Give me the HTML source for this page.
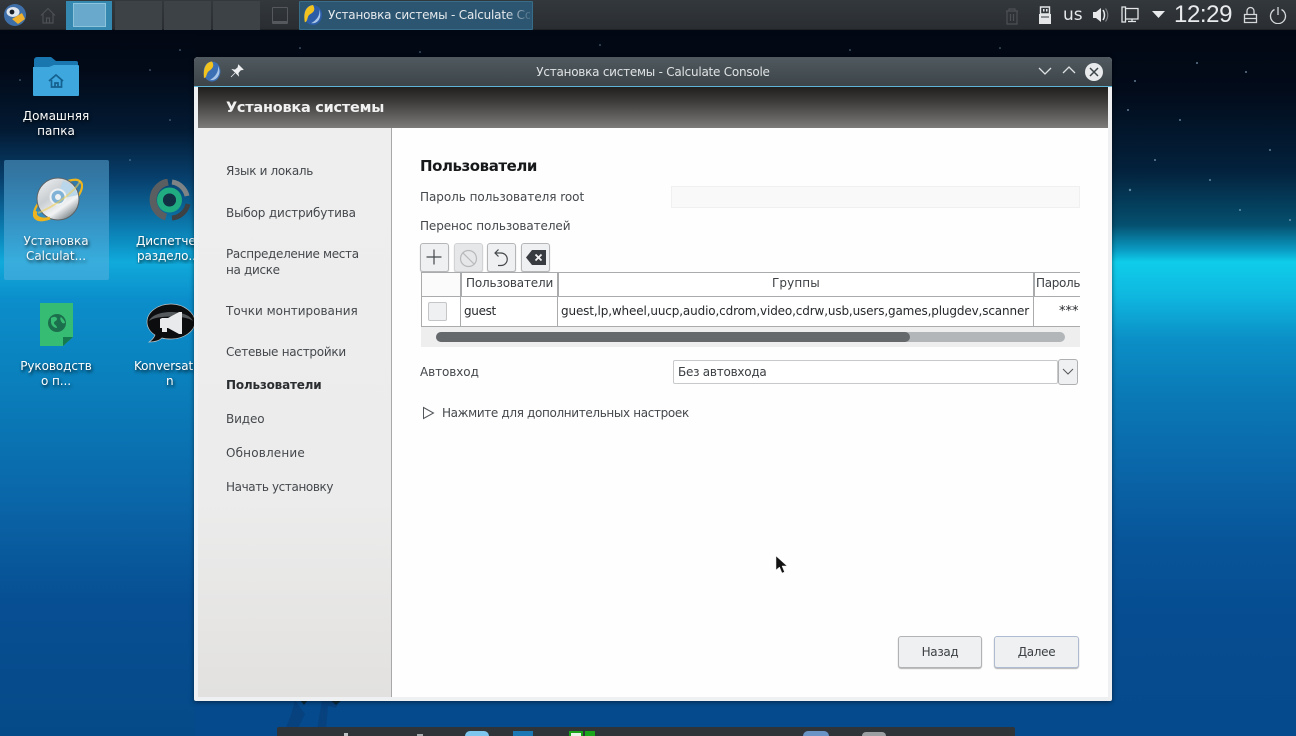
<!DOCTYPE html>
<html lang="ru"><head><meta charset="utf-8"><title>Установка системы</title>
<style>
*{box-sizing:border-box}
html,body{margin:0;padding:0;width:1296px;height:736px;overflow:hidden}
body{position:relative;font-family:"DejaVu Sans","Liberation Sans",sans-serif;font-size:12px;letter-spacing:-.33px;color:#31363b;
background:linear-gradient(180deg,#02060f 0,#020b1a 90px,#03213c 170px,#05506f 225px,#0a9cc4 250px,#0fcdea 262px,#0fb8e0 295px,#0b8fc6 340px,#0a78b5 400px,#0a66a8 470px,#08559a 540px,#064c90 620px,#054a8c 736px)}
.a{position:absolute;white-space:nowrap}
.d{position:absolute;width:100px;text-align:center;color:#fff;font-size:12px;letter-spacing:0;line-height:15px;text-shadow:1px 2px 3px rgba(0,0,0,.85)}
.n{position:absolute;left:226px;white-space:nowrap;color:#44484c;line-height:15.5px}
.btn{position:absolute;top:243px;width:29px;height:29px;background:#eff0f1;border:1px solid #b4b6b8;border-radius:3px;box-shadow:0 1px 1px rgba(0,0,0,.2)}
.ln{position:absolute;background:#a9abad}
</style></head><body>
<div class="a" style="left:0;top:0;width:195px;height:736px;background:linear-gradient(180deg,#02060f 0,#020a18 70px,#031a33 130px,#07416f 180px,#0a6598 210px,#0c8cc0 240px,#10aadb 262px,#0b8ecb 300px,#0a80bc 380px,#0a66a8 500px,#074f93 600px,#054a88 736px)"></div>
<svg class="a" style="left:0;top:30px" width="1296" height="220">
<g fill="#9fc4dc" opacity=".6"><circle cx="1135" cy="51" r="1"/><circle cx="1197" cy="33" r="1"/><circle cx="1246" cy="42" r="1"/><circle cx="1180" cy="90" r="1"/><circle cx="1130" cy="160" r="1.2"/><circle cx="1240" cy="180" r="1"/><circle cx="1290" cy="190" r="1"/><circle cx="1210" cy="150" r="1"/><circle cx="1155" cy="130" r="1"/><circle cx="1270" cy="120" r="1"/><circle cx="1128" cy="80" r="1"/><circle cx="150" cy="40" r=".8"/><circle cx="170" cy="90" r=".8"/><circle cx="20" cy="50" r=".8"/><circle cx="130" cy="130" r=".8"/><circle cx="180" cy="20" r=".8"/><circle cx="300" cy="18" r=".8"/><circle cx="420" cy="22" r=".8"/><circle cx="600" cy="15" r=".8"/><circle cx="850" cy="20" r=".8"/><circle cx="1000" cy="18" r=".8"/></g></svg>

<!-- top panel -->
<div class="a" style="left:0;top:0;width:1296px;height:30px;background:linear-gradient(#33383d,#2a2e32);border-bottom:1px solid #202326"></div>
<svg class="a" style="left:4px;top:4px" width="22" height="22" viewBox="0 0 22 22"><circle cx="11" cy="11" r="11" fill="#3f6fa8"/><ellipse cx="9" cy="8" rx="6.500" ry="5" fill="#dfe6ee"/><circle cx="8" cy="8" r="2.400" fill="#171d26"/><path d="M8 15l10-6 3 6-7 5z" fill="#eeb02d"/></svg>
<svg class="a" style="left:40px;top:7px" width="16" height="17" viewBox="0 0 16 17" fill="none" stroke="#4c5054" stroke-width="1.200"><path d="M1 8.500l7-7 7 7M3 7v9h10V7M6.500 16v-5h3v5"/></svg>
<div class="a" style="left:66px;top:1px;width:46px;height:29px;background:#3589b0"></div>
<div class="a" style="left:73px;top:3px;width:33px;height:24px;background:#69a9cc;border:1px solid #8cc4de"></div>
<div class="a" style="left:115px;top:1px;width:47px;height:29px;background:#3d4246"></div>
<div class="a" style="left:164px;top:1px;width:47px;height:29px;background:#3d4246"></div>
<div class="a" style="left:213px;top:1px;width:47px;height:29px;background:#3d4246"></div>
<div class="a" style="left:272px;top:7px;width:16px;height:17px;border:1px solid #55595d;border-bottom-width:3px;border-radius:1px"></div>
<div class="a" style="left:299px;top:1px;width:234px;height:29px;background:#2b5570;border:1px solid #386d8a;border-radius:1px"></div>
<svg class="a" style="left:303px;top:4px" width="20" height="22" viewBox="0 0 22 22"><ellipse cx="11" cy="11" rx="10" ry="11" fill="#2c5da6"/><path d="M11 0C4 1 0 7 2 19c4-1 2-7 6-9s6-5 3-10z" fill="#f2c21f"/><path d="M18 5c1 6-3 12-9 15 6 1 10-4 10-9 0-2 0-4-1-6z" fill="#a9c6e8"/></svg>
<div class="a" style="left:328px;top:7px;width:202px;overflow:hidden;color:#e6eaee;font-size:12px;letter-spacing:-.2px;line-height:16px;-webkit-mask-image:linear-gradient(90deg,#000 178px,rgba(0,0,0,.2) 200px)">Установка системы - Calculate Console</div>

<svg class="a" style="left:1004px;top:7px" width="16" height="18" viewBox="0 0 16 18" fill="none" stroke="#4d5155" stroke-width="1.200"><path d="M2 4h12M5 4V2h6v2M3 4v13h10V4M6.500 7v7M9.500 7v7"/></svg>
<svg class="a" style="left:1038px;top:6px" width="14" height="19" viewBox="0 0 14 19"><path d="M2.500 1h9v7h-9z" fill="none" stroke="#e3e5e7" stroke-width="1.400"/><path d="M1 8h12v10H1z" fill="#e3e5e7"/><path d="M5 3h1.500v2.500H5zM8 3h1.500v2.500H8z" fill="#e3e5e7"/><path d="M3 11h8" stroke="#33383d"/></svg>
<div class="a" style="left:1063px;top:5px;color:#e6e8ea;font-size:17px;letter-spacing:0;line-height:20px">us</div>
<svg class="a" style="left:1092px;top:6px" width="18" height="18" viewBox="0 0 18 18"><path d="M1 6h3l5-4v14l-5-4H1z" fill="#e6e8ea"/><path d="M11 4c2 3 2 7 0 10" fill="none" stroke="#e6e8ea" stroke-width="1.500"/><path d="M13.500 2.500c3 4 3 9 0 13" fill="none" stroke="#7b7f83" stroke-width="1.200"/></svg>
<svg class="a" style="left:1120px;top:6px" width="19" height="18" viewBox="0 0 19 18" fill="none" stroke="#e3e5e7" stroke-width="1.300"><path d="M5 2.500h13v10.500H5M2 1v15h3.500V1zM8 15.500h8M12 13v2"/></svg>
<svg class="a" style="left:1152px;top:11px" width="13" height="8" viewBox="0 0 13 8"><path d="M0 0h13L6.500 7z" fill="#e8eaec"/></svg>
<div class="a" style="left:1174px;top:1px;color:#e8eaec;font-size:24px;line-height:28px;letter-spacing:-.4px;font-family:'Liberation Sans',sans-serif">12:29</div>
<svg class="a" style="left:1243px;top:6px" width="15" height="18" viewBox="0 0 15 18" fill="none" stroke="#d5d7d9" stroke-width="1.300"><path d="M1.500 8.500h12v8h-12zM4 8.500V5a3.500 3.500 0 0 1 7 0v3.500M2 12.500h11"/></svg>
<svg class="a" style="left:1269px;top:6px" width="18" height="18" viewBox="0 0 18 18" fill="none" stroke="#d5d7d9" stroke-width="1.300"><path d="M5.500 3.500a7.500 7.500 0 1 0 7 0M9 1v8"/></svg>

<!-- desktop icons -->
<svg class="a" style="left:32px;top:55px" width="48" height="44" viewBox="0 0 48 44"><path d="M2 5a3 3 0 0 1 3-3h14l5 4h20a2 2 0 0 1 2 2v30H2z" fill="#1a76ae"/><path d="M1 12h16l5-2h24a1 1 0 0 1 1 1v29a1 1 0 0 1-1 1H2a1 1 0 0 1-1-1z" fill="#3ea7dd"/><path d="M17 26l7-6 7 6M19.500 25v7h10v-7M23 32v-4h3v4" fill="none" stroke="#14608f" stroke-width="1.700"/></svg>
<div class="d" style="left:6px;top:109px">Домашняя<br>папка</div>

<div class="a" style="left:4px;top:160px;width:105px;height:120px;background:rgba(96,178,224,.5);border-radius:2px"></div>
<svg class="a" style="left:33px;top:175px" width="50" height="50" viewBox="0 0 50 50"><defs><linearGradient id="cd" x1="0" y1="0" x2=".7" y2="1"><stop offset="0" stop-color="#f4f5f6"/><stop offset=".45" stop-color="#c9ced2"/><stop offset=".75" stop-color="#f2f3f4"/><stop offset="1" stop-color="#7e878c"/></linearGradient></defs><ellipse cx="25" cy="25" rx="29" ry="12" transform="rotate(-38 25 25)" fill="none" stroke="#eeb41e" stroke-width="2.200"/><circle cx="25" cy="24" r="21" fill="url(#cd)" stroke="#5b6266" stroke-width="1"/><path d="M30 6a21 21 0 0 1 15 14l-14 3a8 8 0 0 0-5-6z" fill="#b9d6ea"/><circle cx="25" cy="22" r="7.500" fill="#7fb2d6" stroke="#eef1f3" stroke-width="2"/><circle cx="25" cy="22" r="3" fill="#eef1f3"/><path d="M47 6C44 14 25 30 5 38" fill="none" stroke="#f4cf4b" stroke-width="1.800" opacity=".55"/><path d="M3 36c-3 6 5 10 14 7" fill="none" stroke="#eeb41e" stroke-width="3"/></svg>
<div class="d" style="left:6px;top:234px;color:#f2f8fb">Установка<br>Calculat...</div>

<svg class="a" style="left:149px;top:179px" width="42" height="42" viewBox="0 0 42 42" fill="none"><path d="M19 3A18 18 0 0 0 17 38" stroke="#5a5e61" stroke-width="7"/><path d="M23 3A18 18 0 0 1 38 17" stroke="#7e8385" stroke-width="5"/><path d="M39 25A18 18 0 0 1 23 39" stroke="#3d4144" stroke-width="5"/><circle cx="20.500" cy="21" r="9.500" stroke="#20ab80" stroke-width="6"/><circle cx="20.500" cy="21" r="6.500" fill="#123043"/></svg>
<div class="d" style="left:120px;top:234px;width:75px;text-align:left;padding-left:16px;overflow:hidden;letter-spacing:-.1px">Диспетче<br><span style="margin-left:1px">раздело...</span></div>

<svg class="a" style="left:40px;top:303px" width="34" height="44" viewBox="0 0 34 44"><path d="M0 0h33v34L23 43H0z" fill="#37bc74"/><path d="M23 43V34h10z" fill="#157a4e"/><circle cx="17" cy="20" r="9" fill="#1c6f4c"/><path d="M11 15c3-2 6-1 6 1s-3 2-3 4 3 2 3 5c-3 0-6-3-6-6zM21 14c2 2 4 4 4 6-2 1-3 0-4-2s-1-3 0-4z" fill="#37bc74"/></svg>
<div class="d" style="left:6px;top:359px;letter-spacing:-.08px">Руководств<br>о п...</div>

<svg class="a" style="left:146px;top:302px" width="49" height="46" viewBox="0 0 49 46"><path d="M25 2C12 2 1 10 1 20c0 5 3 10 8 13-1 3-3 5-6 7 5 0 10-1 13-4 3 1 6 1 9 1 13 0 24-8 24-17S38 2 25 2z" fill="#0c0d0e" stroke="#c0c4c7" stroke-width=".7"/><path d="M3 19C8 7 42 7 47 19 40 13 10 13 3 19z" fill="#55595c"/><path d="M16 16h6l11-6h3v22h-3l-11-6h-1v4h-5v-4h-2v-9z" fill="#e9eaeb"/></svg>
<div class="d" style="left:120px;top:359px;width:75px;overflow:hidden;text-align:left;padding-left:14px;letter-spacing:-.1px">Konversat<br><span style="margin-left:32px">n</span></div>

<!-- silhouette & dock -->
<svg class="a" style="left:270px;top:700px" width="130" height="30" viewBox="0 0 130 30"><path d="M25 0l10 14-8 16H15l6-15zM52 0h18l-4 8-8-2-2 24h-9z" fill="#0a3a72" opacity=".55"/><path d="M30 0l4 5 4-5zM60 0l6 5 6-5z" fill="#0a2a3a"/></svg>
<div class="a" style="left:277px;top:727px;width:738px;height:9px;background:#2e3438;border-radius:2px 2px 0 0"></div>
<div class="a" style="left:465px;top:731px;width:24px;height:5px;background:#7ec6ee;border-radius:12px 12px 0 0"></div>
<div class="a" style="left:513px;top:731px;width:20px;height:5px;background:#1b78b4"></div>
<div class="a" style="left:569px;top:731px;width:14px;height:5px;background:#e8f3e8;border:2px solid #1aa51a;border-bottom:0"></div>
<div class="a" style="left:585px;top:731px;width:10px;height:5px;background:#1aa51a"></div>
<div class="a" style="left:803px;top:731px;width:26px;height:5px;background:#6a93c6;border-radius:13px 13px 0 0"></div>
<div class="a" style="left:862px;top:732px;width:24px;height:4px;background:#9b9fa2;border-radius:12px 12px 0 0"></div>
<div class="a" style="left:344px;top:733px;width:4px;height:3px;background:#c0c3c5"></div>
<div class="a" style="left:417px;top:734px;width:6px;height:2px;background:#a8acae"></div>

<!-- window -->
<div class="a" style="left:194px;top:57px;width:918px;height:644px;background:#eff0f1;border-radius:4px 4px 2px 2px;box-shadow:0 1px 5px rgba(0,0,0,.5)"></div>
<div class="a" style="left:194px;top:57px;width:918px;height:30px;background:linear-gradient(#50595f,#3d4549);border-bottom:1px solid #5fb3d4;border-radius:4px 4px 0 0"></div>
<svg class="a" style="left:203px;top:61px" width="18" height="21" viewBox="0 0 18 21"><ellipse cx="9" cy="10.500" rx="8.500" ry="10" fill="#3d6fb4"/><path d="M9 .5C3 1 0 7 1 17c3 0 2-5 5-7s6-5 3-9.500z" fill="#f2c21f"/><path d="M15 5c1 6-3 11-8 14 5 1 9-3 9.500-8 0-2-.5-4-1.500-6z" fill="#a9c6e8"/></svg>
<svg class="a" style="left:230px;top:64px" width="14" height="14" viewBox="0 0 14 14"><path d="M8.500 1l4.500 4.500-2.500.5L8 9l.5 2.500-6-6L5 6l3-2.500zM5 9l-4 4" fill="#eef0f1" stroke="#eef0f1" stroke-width=".8"/></svg>
<div class="a" style="left:194px;top:65px;width:918px;text-align:center;color:#dfe2e4;font-size:12px;letter-spacing:-.24px;line-height:15px">Установка системы - Calculate Console</div>
<svg class="a" style="left:1038px;top:66px" width="14" height="10" viewBox="0 0 14 10"><path d="M1 2l6 6 6-6" fill="none" stroke="#dfe2e4" stroke-width="1.300"/></svg>
<svg class="a" style="left:1062px;top:65px" width="14" height="10" viewBox="0 0 14 10"><path d="M1 8l6-6 6 6" fill="none" stroke="#dfe2e4" stroke-width="1.300"/></svg>
<svg class="a" style="left:1085px;top:63px" width="18" height="18" viewBox="0 0 18 18"><circle cx="9" cy="9" r="9" fill="#e8eaeb"/><path d="M5 5l8 8M13 5l-8 8" stroke="#3d4549" stroke-width="1.500"/></svg>

<div class="a" style="left:198px;top:87px;width:910px;height:41px;background:linear-gradient(#211f1d,#383735 30%,#7c7b79)"></div>
<div class="a" style="left:226px;top:98px;color:#f1f1f1;font-size:14.500px;font-weight:bold;line-height:20px;letter-spacing:-.25px">Установка системы</div>

<div class="a" style="left:198px;top:128px;width:194px;height:569px;background:linear-gradient(#eeeeee,#ececec 65%,#e2e1df);border-right:1px solid #a8a8a8"></div>
<div class="a" style="left:392px;top:128px;width:716px;height:569px;background:#fefefe"></div>

<div class="n" style="top:164px">Язык и локаль</div>
<div class="n" style="top:206px;letter-spacing:-.16px">Выбор дистрибутива</div>
<div class="n" style="top:247px">Распределение места<br>на диске</div>
<div class="n" style="top:304px;letter-spacing:-.01px">Точки монтирования</div>
<div class="n" style="top:345px;letter-spacing:-.27px">Сетевые настройки</div>
<div class="n" style="top:378px;font-weight:bold;color:#2b2e31;letter-spacing:-.2px">Пользователи</div>
<div class="n" style="top:412px;letter-spacing:-.13px">Видео</div>
<div class="n" style="top:446px;letter-spacing:.17px">Обновление</div>
<div class="n" style="top:480px;letter-spacing:-.39px">Начать установку</div>

<div class="a" style="left:420px;top:156px;color:#16181a;font-size:15px;font-weight:bold;line-height:20px;letter-spacing:-.45px">Пользователи</div>
<div class="a" style="left:420px;top:190px;line-height:15px;color:#44484c;letter-spacing:-.04px">Пароль пользователя root</div>
<div class="a" style="left:671px;top:186px;width:409px;height:22px;background:#f9f9f9;border:1px solid #f0f0f0"></div>
<div class="a" style="left:420px;top:219px;line-height:15px;color:#44484c;letter-spacing:-.09px">Перенос пользователей</div>

<div class="btn" style="left:420px"></div>
<svg class="a" style="left:425px;top:248px" width="18" height="18" viewBox="0 0 18 18"><path d="M1.500 9h15M9 1.500v15" stroke="#44484c" stroke-width="1.200"/></svg>
<div class="btn" style="left:454px;background:#e6e7e8;border-color:#d2d3d4"></div>
<svg class="a" style="left:459px;top:249px" width="19" height="19" viewBox="0 0 19 19" fill="none" stroke="#b7b9bb" stroke-width="1.200"><circle cx="9.500" cy="9.500" r="8"/><path d="M4 4l11 11"/></svg>
<div class="btn" style="left:487px"></div>
<svg class="a" style="left:493px;top:248px" width="18" height="20" viewBox="0 0 18 20" fill="none" stroke="#44484c" stroke-width="1.200"><path d="M5.500 1.500L2 5l3.500 3.500M2 5h6a6 6 0 0 1 0 12.500H5"/></svg>
<div class="btn" style="left:521px"></div>
<svg class="a" style="left:525px;top:249px" width="22" height="17" viewBox="0 0 22 17"><path d="M7 1h14v15H7L1 8.500z" fill="#383c40"/><path d="M10.500 5.500l6 6M16.500 5.500l-6 6" stroke="#f2f2f2" stroke-width="1.800"/></svg>

<!-- table -->
<div class="a" style="left:421px;top:272px;width:659px;height:55px;background:#fff"></div>
<div class="a" style="left:421px;top:273px;width:40px;height:24px;background:#fbfbfb"></div>
<div class="ln" style="left:421px;top:272px;width:659px;height:1px"></div>
<div class="ln" style="left:421px;top:296px;width:659px;height:1px"></div>
<div class="ln" style="left:421px;top:326px;width:659px;height:1px"></div>
<div class="ln" style="left:421px;top:272px;width:1px;height:55px"></div>
<div class="ln" style="left:460px;top:272px;width:2px;height:25px"></div>
<div class="ln" style="left:460px;top:296px;width:1px;height:31px"></div>
<div class="ln" style="left:557px;top:272px;width:2px;height:25px"></div>
<div class="ln" style="left:557px;top:296px;width:1px;height:31px"></div>
<div class="ln" style="left:1033px;top:272px;width:2px;height:25px"></div>
<div class="ln" style="left:1033px;top:296px;width:1px;height:31px"></div>
<div class="a" style="left:428px;top:302px;width:19px;height:19px;background:#eff0f1;border:1px solid #c3c5c7;border-radius:2px"></div>
<div class="a" style="left:466px;top:276px;line-height:15px;color:#3c4044;letter-spacing:-.16px">Пользователи</div>
<div class="a" style="left:772px;top:276px;line-height:15px;color:#3c4044;letter-spacing:.1px">Группы</div>
<div class="a" style="left:1036px;top:276px;width:44px;overflow:hidden;line-height:15px;color:#3c4044">Пароль</div>
<div class="a" style="left:464px;top:304px;line-height:15px;color:#26292c">guest</div>
<div class="a" style="left:561px;top:304px;line-height:15px;color:#26292c;letter-spacing:-.14px">guest,lp,wheel,uucp,audio,cdrom,video,cdrw,usb,users,games,plugdev,scanner</div>
<div class="a" style="left:1059px;top:304px;width:21px;overflow:hidden;font-size:13px;letter-spacing:0;line-height:15px;color:#26292c">***</div>
<div class="a" style="left:421px;top:327px;width:659px;height:20px;background:#eeeeee"></div>
<div class="a" style="left:436px;top:332px;width:629px;height:10px;background:#b2b6b8;border-radius:5px"></div>
<div class="a" style="left:436px;top:332px;width:474px;height:10px;background:#66696c;border-radius:5px"></div>

<div class="a" style="left:420px;top:365px;line-height:15px;color:#44484c;letter-spacing:-.08px">Автовход</div>
<div class="a" style="left:673px;top:360px;width:385px;height:24px;background:#fff;border:1px solid #c8c9ca;border-radius:2px"></div>
<div class="a" style="left:678px;top:365px;line-height:15px;color:#3c4044;letter-spacing:-.25px">Без автовхода</div>
<div class="a" style="left:1058px;top:359px;width:20px;height:26px;background:#eff0f1;border:1px solid #aeb0b2;border-radius:3px"></div>
<svg class="a" style="left:1062px;top:368px" width="12" height="8" viewBox="0 0 12 8"><path d="M1 1l5 5 5-5" fill="none" stroke="#53575b" stroke-width="1"/></svg>

<svg class="a" style="left:422px;top:406px" width="13" height="14" viewBox="0 0 13 14"><path d="M1.500 1.500l10 5.500-10 5.500z" fill="none" stroke="#53575b" stroke-width="1"/></svg>
<div class="a" style="left:442px;top:406px;line-height:15px;color:#44484c;letter-spacing:-.35px">Нажмите для дополнительных настроек</div>

<div class="a" style="left:898px;top:636px;width:84px;height:32px;background:#eff0f1;border:1px solid #b1b3b5;border-radius:3px;box-shadow:0 1px 1px rgba(0,0,0,.3);text-align:center;line-height:30px;color:#3c4044;font-size:12px">Назад</div>
<div class="a" style="left:994px;top:636px;width:85px;height:32px;background:#eff0f1;border:1px solid #aebbd0;border-radius:3px;box-shadow:0 1px 1px rgba(0,0,0,.3);text-align:center;line-height:30px;color:#3c4044;font-size:12px">Далее</div>

<svg class="a" style="left:775px;top:555px" width="13" height="20" viewBox="0 0 13 20"><path d="M1 1v14l3.500-3 2.500 6 2.500-1-2.500-6h5z" fill="#111" stroke="#eee" stroke-width=".5"/></svg>
</body></html>
